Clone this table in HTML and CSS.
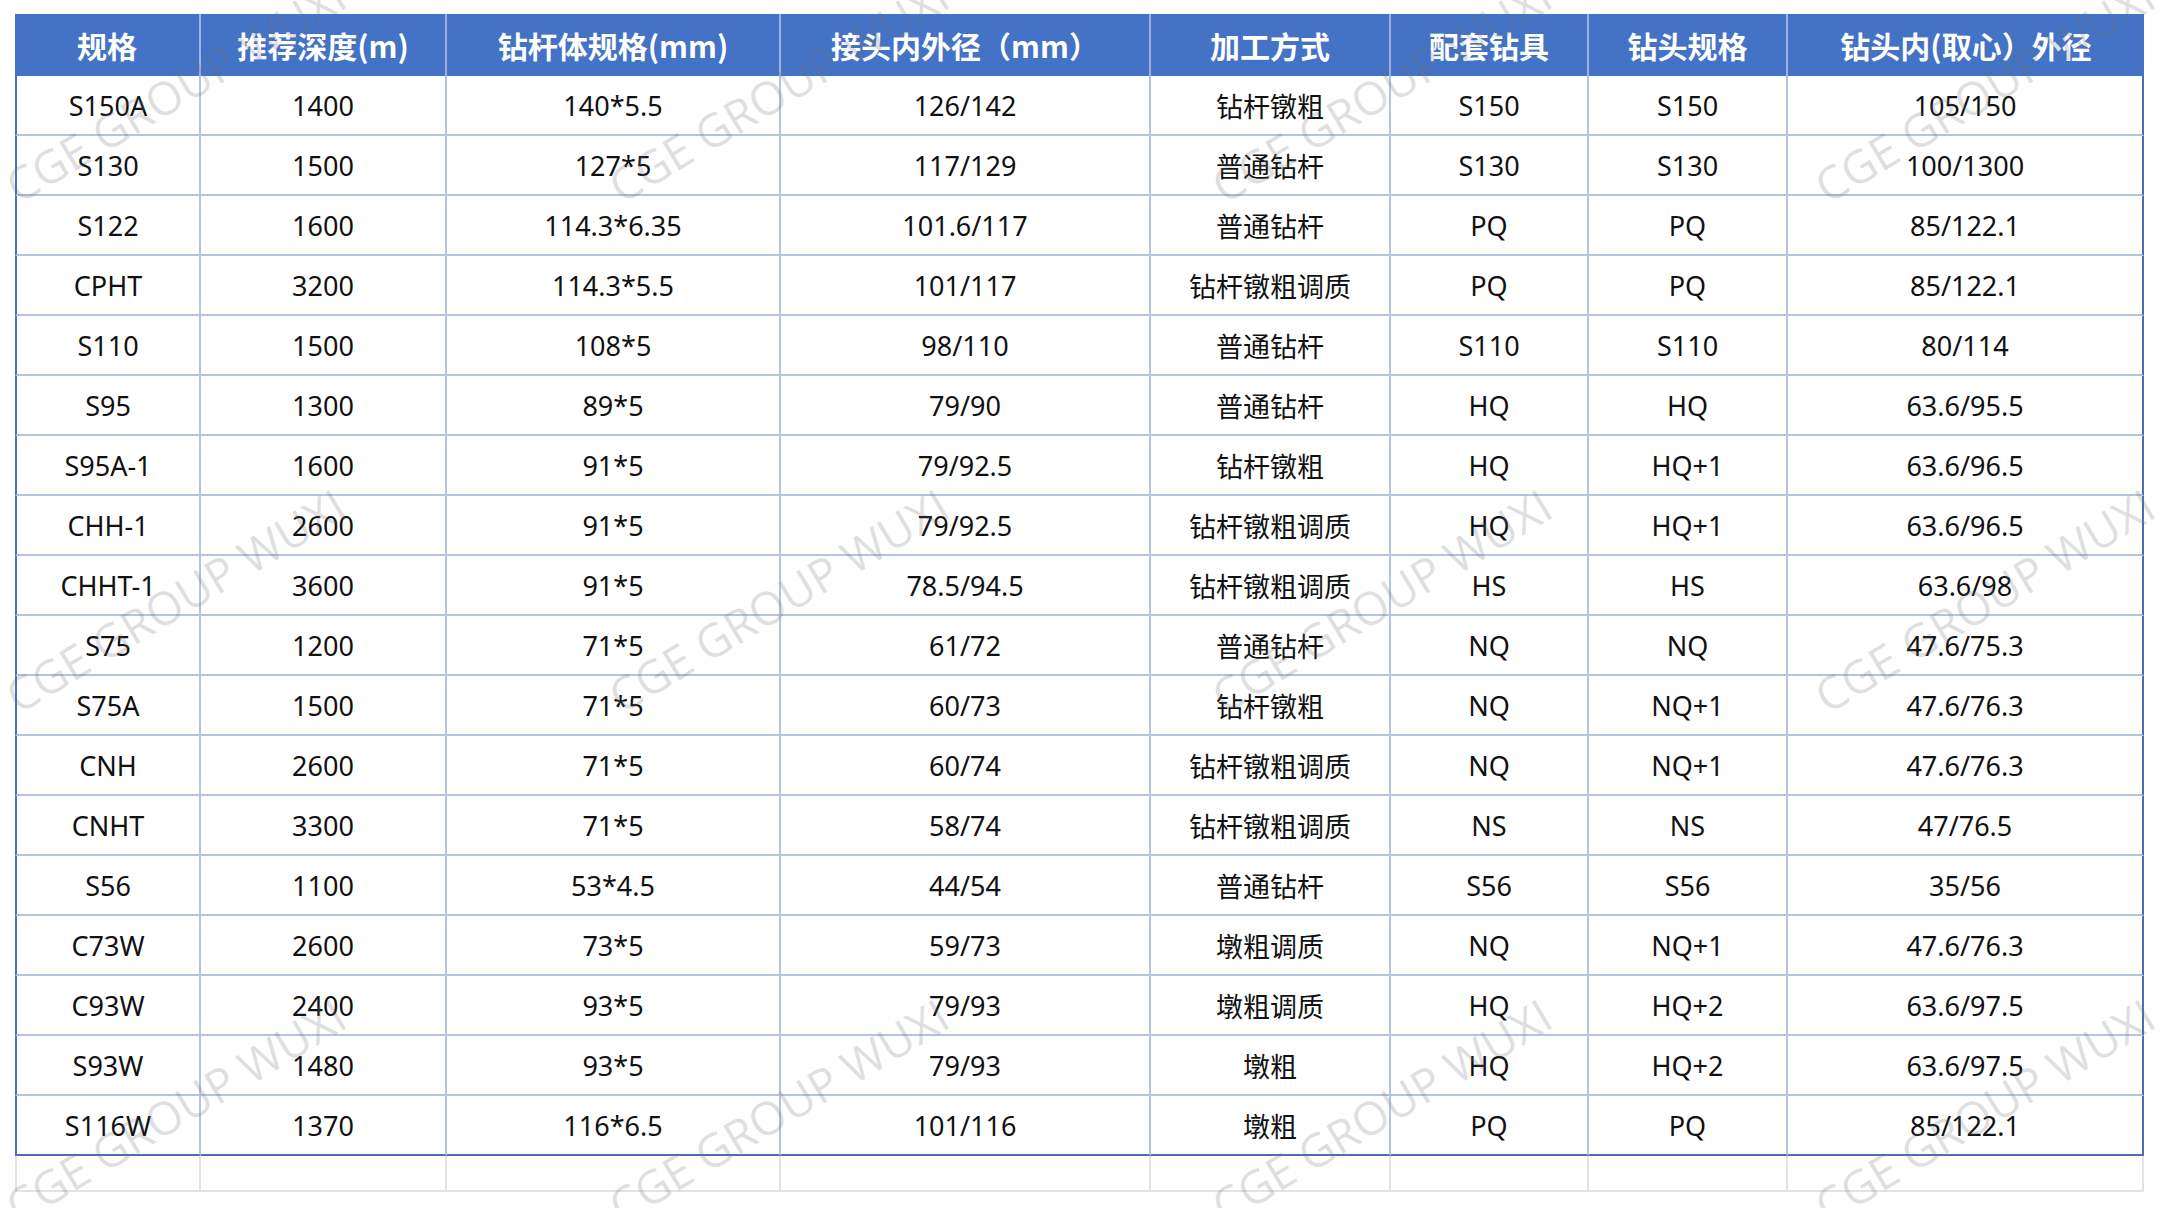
FILE: index.html
```html
<!DOCTYPE html>
<html lang="zh-CN">
<head>
<meta charset="utf-8">
<title>钻杆规格表</title>
<link rel="stylesheet" href="styles.css">
</head>
<body>
<table class="spec">
  <colgroup>
    <col class="c1"><col class="c2"><col class="c3"><col class="c4"><col class="c5"><col class="c6"><col class="c7"><col class="c8">
  </colgroup>
  <thead>
    <tr><th>规格</th><th>推荐深度(m)</th><th>钻杆体规格(mm)</th><th>接头内外径（mm）</th><th>加工方式</th><th>配套钻具</th><th>钻头规格</th><th>钻头内(取心）外径</th></tr>
  </thead>
  <tbody>
    <tr><td>S150A</td><td>1400</td><td>140*5.5</td><td>126/142</td><td>钻杆镦粗</td><td>S150</td><td>S150</td><td>105/150</td></tr>
    <tr><td>S130</td><td>1500</td><td>127*5</td><td>117/129</td><td>普通钻杆</td><td>S130</td><td>S130</td><td>100/1300</td></tr>
    <tr><td>S122</td><td>1600</td><td>114.3*6.35</td><td>101.6/117</td><td>普通钻杆</td><td>PQ</td><td>PQ</td><td>85/122.1</td></tr>
    <tr><td>CPHT</td><td>3200</td><td>114.3*5.5</td><td>101/117</td><td>钻杆镦粗调质</td><td>PQ</td><td>PQ</td><td>85/122.1</td></tr>
    <tr><td>S110</td><td>1500</td><td>108*5</td><td>98/110</td><td>普通钻杆</td><td>S110</td><td>S110</td><td>80/114</td></tr>
    <tr><td>S95</td><td>1300</td><td>89*5</td><td>79/90</td><td>普通钻杆</td><td>HQ</td><td>HQ</td><td>63.6/95.5</td></tr>
    <tr><td>S95A-1</td><td>1600</td><td>91*5</td><td>79/92.5</td><td>钻杆镦粗</td><td>HQ</td><td>HQ+1</td><td>63.6/96.5</td></tr>
    <tr><td>CHH-1</td><td>2600</td><td>91*5</td><td>79/92.5</td><td>钻杆镦粗调质</td><td>HQ</td><td>HQ+1</td><td>63.6/96.5</td></tr>
    <tr><td>CHHT-1</td><td>3600</td><td>91*5</td><td>78.5/94.5</td><td>钻杆镦粗调质</td><td>HS</td><td>HS</td><td>63.6/98</td></tr>
    <tr><td>S75</td><td>1200</td><td>71*5</td><td>61/72</td><td>普通钻杆</td><td>NQ</td><td>NQ</td><td>47.6/75.3</td></tr>
    <tr><td>S75A</td><td>1500</td><td>71*5</td><td>60/73</td><td>钻杆镦粗</td><td>NQ</td><td>NQ+1</td><td>47.6/76.3</td></tr>
    <tr><td>CNH</td><td>2600</td><td>71*5</td><td>60/74</td><td>钻杆镦粗调质</td><td>NQ</td><td>NQ+1</td><td>47.6/76.3</td></tr>
    <tr><td>CNHT</td><td>3300</td><td>71*5</td><td>58/74</td><td>钻杆镦粗调质</td><td>NS</td><td>NS</td><td>47/76.5</td></tr>
    <tr><td>S56</td><td>1100</td><td>53*4.5</td><td>44/54</td><td>普通钻杆</td><td>S56</td><td>S56</td><td>35/56</td></tr>
    <tr><td>C73W</td><td>2600</td><td>73*5</td><td>59/73</td><td>墩粗调质</td><td>NQ</td><td>NQ+1</td><td>47.6/76.3</td></tr>
    <tr><td>C93W</td><td>2400</td><td>93*5</td><td>79/93</td><td>墩粗调质</td><td>HQ</td><td>HQ+2</td><td>63.6/97.5</td></tr>
    <tr><td>S93W</td><td>1480</td><td>93*5</td><td>79/93</td><td>墩粗</td><td>HQ</td><td>HQ+2</td><td>63.6/97.5</td></tr>
    <tr><td>S116W</td><td>1370</td><td>116*6.5</td><td>101/116</td><td>墩粗</td><td>PQ</td><td>PQ</td><td>85/122.1</td></tr>
  </tbody>
  <tfoot>
    <tr class="blank"><td></td><td></td><td></td><td></td><td></td><td></td><td></td><td></td></tr>
  </tfoot>
</table>
<div class="watermarks" aria-hidden="true">
  <span>CGE GROUP WUXI</span><span>CGE GROUP WUXI</span><span>CGE GROUP WUXI</span><span>CGE GROUP WUXI</span>
  <span>CGE GROUP WUXI</span><span>CGE GROUP WUXI</span><span>CGE GROUP WUXI</span><span>CGE GROUP WUXI</span>
  <span>CGE GROUP WUXI</span><span>CGE GROUP WUXI</span><span>CGE GROUP WUXI</span><span>CGE GROUP WUXI</span>
</div>
</body>
</html>
```

FILE: styles.css
```css
html, body {
  margin: 0;
  padding: 0;
  background: #ffffff;
}

body {
  position: relative;
  width: 2160px;
  height: 1208px;
  overflow: hidden;
  font-family: "Noto Sans", "Noto Sans CJK SC", sans-serif;
  color: #111111;
}

.spec {
  border-collapse: separate;
  border-spacing: 0;
  table-layout: fixed;
  width: 2129px;
  margin: 14px 0 0 15px;
}

.c1 { width: 186px; }
.c2 { width: 246px; }
.c3 { width: 334px; }
.c4 { width: 370px; }
.c5 { width: 240px; }
.c6 { width: 198px; }
.c7 { width: 199px; }
.c8 { width: 356px; }

.spec th,
.spec td {
  box-sizing: border-box;
  padding: 0;
  text-align: center;
  vertical-align: middle;
  white-space: nowrap;
}

.spec thead tr { height: 62px; }

.spec th {
  height: 62px;
  background: #4472c4;
  color: #ffffff;
  font-family: "Noto Sans CJK SC", "Noto Sans", sans-serif;
  font-weight: 700;
  font-size: 30px;
  border-right: 2px solid #9db2e2;
}

.spec th:last-child { border-right: none; }

.spec tbody tr { height: 60px; }

.spec td {
  height: 60px;
  font-size: 27px;
  border-right: 2px solid #b6c3df;
  border-bottom: 2px solid #b6c3df;
}

.spec tbody td:first-child { border-left: 2px solid #4e6fb5; }
.spec tbody td:last-child { border-right: 2px solid #4e6fb5; }
.spec tbody tr:last-child td { border-bottom: 2px solid #4e6fb5; }

.spec .blank { height: 36px; }

.spec .blank td {
  height: 36px;
  border-right: 2px solid #e3e3e3;
  border-bottom: 2px solid #e3e3e3;
}

.spec .blank td:first-child { border-left: 2px solid #e3e3e3; }

.watermarks {
  position: absolute;
  left: -126px;
  top: -165px;
  display: grid;
  grid-template-columns: repeat(4, 603px);
  grid-template-rows: repeat(3, 510px);
  place-items: center;
  pointer-events: none;
}

.watermarks span {
  display: block;
  transform: rotate(-31deg);
  font-family: "Open Sans", "Noto Sans", sans-serif;
  font-weight: 400;
  font-size: 46px;
  color: rgba(110, 110, 120, 0.22);
  white-space: nowrap;
}
```
